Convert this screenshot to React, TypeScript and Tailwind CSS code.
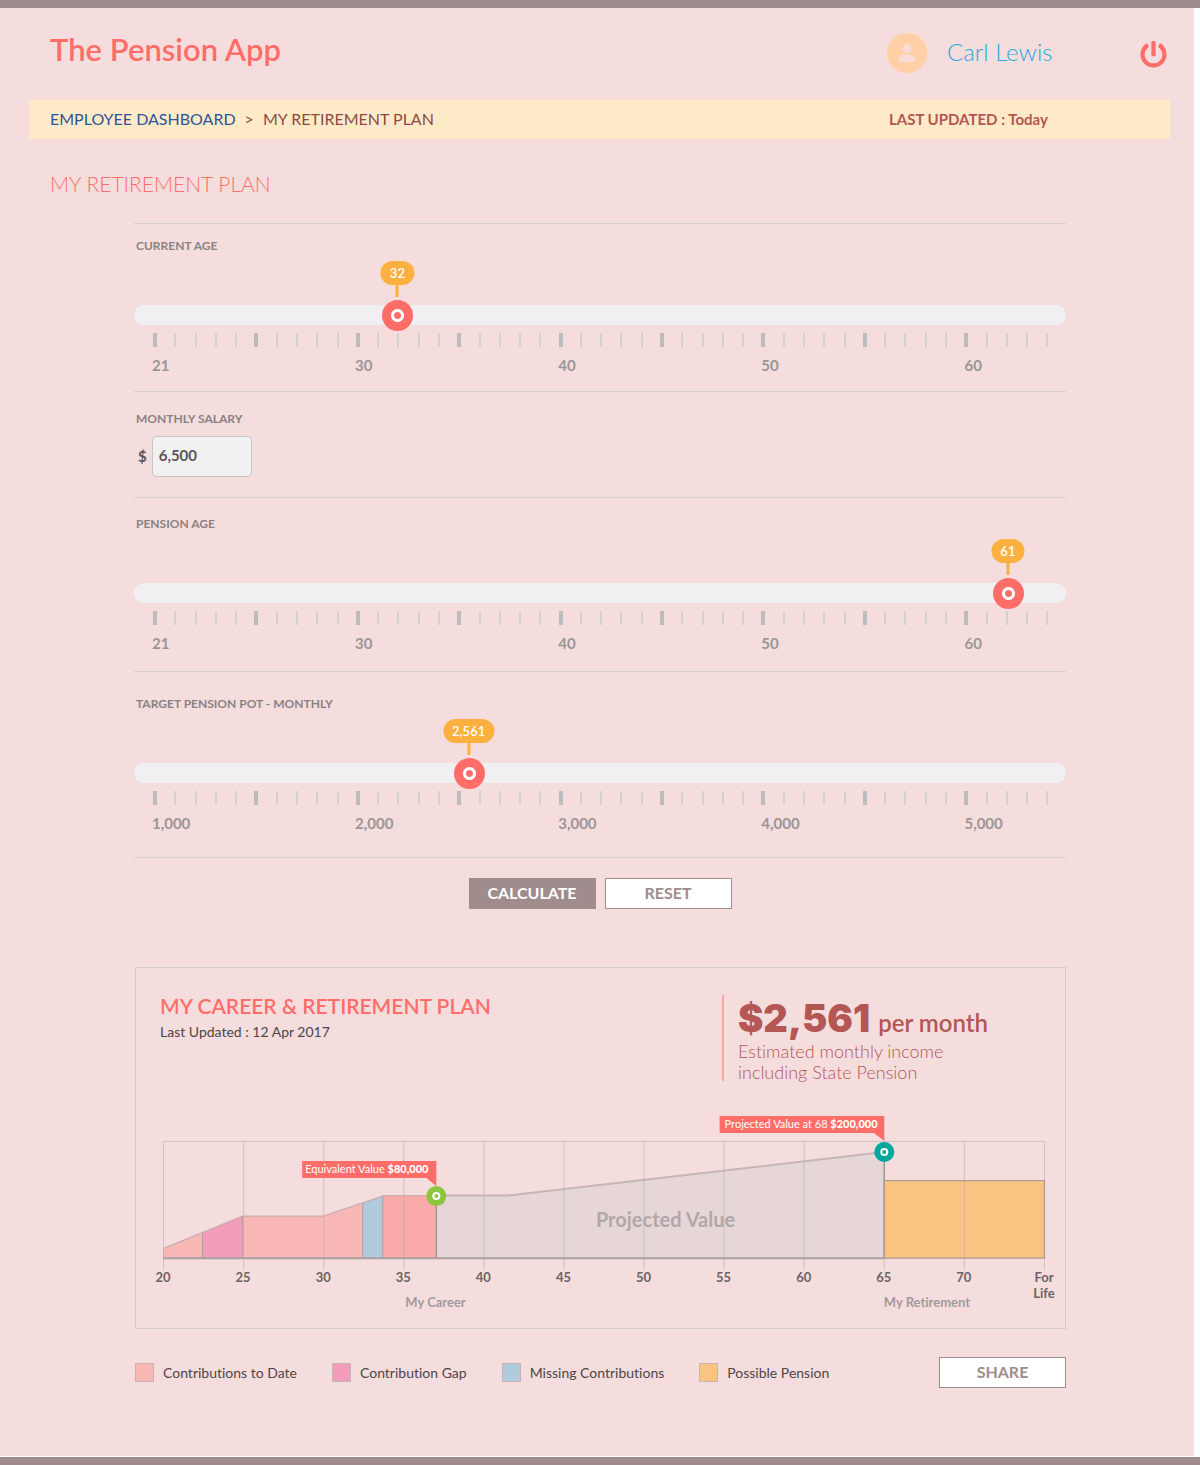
import { useState } from "react";
import type { ReactNode } from "react";
import { FaPowerOff, FaUser } from "react-icons/fa";

const TICKS = Array.from({ length: 45 }, (_, i) => i);

type SliderFieldProps = {
  id: string;
  label: string;
  min: number;
  max: number;
  step: number;
  initial: number;
  marks: string[];
  className: string;
};

function SliderField({ id, label, min, max, step, initial, marks, className }: SliderFieldProps) {
  const [value, setValue] = useState(initial);
  const fraction = (value - min) / (max - min);
  return (
    <section className={`border-t border-[#d6cfd1] ${className}`}>
      <label htmlFor={id} className="block pl-0.5 text-xs leading-4 font-bold text-[#8a8283]">
        {label}
      </label>
      <div className="relative mt-[51px] h-5">
        <input
          id={id}
          type="range"
          min={min}
          max={max}
          step={step}
          value={value}
          onChange={(e) => setValue(Number(e.target.value))}
          className="block h-5 w-full cursor-pointer appearance-none rounded-full bg-[#f0f0f2] [&::-webkit-slider-thumb]:size-[31px] [&::-webkit-slider-thumb]:appearance-none [&::-webkit-slider-thumb]:rounded-full [&::-webkit-slider-thumb]:bg-[radial-gradient(circle,#ff6d68_0_3px,#fff_4px_6px,#ff6d68_7px)]"
        />
        <output
          htmlFor={id}
          className="pointer-events-none absolute bottom-7 flex -translate-x-1/2 flex-col items-center"
          style={{ left: `calc(15px + ${fraction} * (100% - 31px))` }}
        >
          <span className="min-w-[33px] rounded-full bg-[#fbb040] px-[9px] text-center text-[13px] leading-6 font-semibold text-white">
            {Math.round(value).toLocaleString("en-US")}
          </span>
          <span className="h-3 w-[3px] bg-[#fbb040]" />
        </output>
      </div>
      <div className="mt-2 mr-4 ml-[19px] flex justify-between">
        {TICKS.map((i) => (
          <span key={i} className="flex h-[14px] w-1 justify-center">
            <span className={i % 5 === 0 ? "w-1 bg-[#bcbcbd]" : "w-0.5 bg-[#d3d1d2]"} />
          </span>
        ))}
      </div>
      <div className="mt-2 grid grid-cols-9 pl-[18px] text-[15px] leading-5 font-bold text-[#9b9595]">
        {marks.map((m) => (
          <span key={m} className="col-span-2 last:col-span-1">
            {m}
          </span>
        ))}
      </div>
    </section>
  );
}

function OutlineButton({ children }: { children: ReactNode }) {
  return (
    <button
      type="button"
      className="h-[31px] w-[127px] cursor-pointer border border-[#a08c8c] bg-white pb-0.5 text-base leading-none font-bold text-[#a08c8c]"
    >
      {children}
    </button>
  );
}

const GRID = [
  { x: 26, label: "20" },
  { x: 106, label: "25" },
  { x: 186, label: "30" },
  { x: 266, label: "35" },
  { x: 346, label: "40" },
  { x: 426, label: "45" },
  { x: 506, label: "50" },
  { x: 586, label: "55" },
  { x: 666, label: "60" },
  { x: 746, label: "65" },
  { x: 826, label: "70" },
  { x: 906, label: "For" },
];

function Marker({ x, y, fill }: { x: number; y: number; fill: string }) {
  return (
    <g>
      <circle cx={x} cy={y} r="10" fill={fill} />
      <circle cx={x} cy={y} r="3" fill="none" stroke="#fff" strokeWidth="2" />
    </g>
  );
}

function PlanChart() {
  return (
    <svg viewBox="-1 0 928 212" className="block w-full" role="img" aria-label="Pension value by age">
      <g>
        <path d="M26 150V140.500L65.500 124.500V150Z" fill="#f9b7b6" />
        <path d="M65.500 150V124.500L105.500 108V150Z" fill="#f19dbb" />
        <path d="M105.500 150V108H186L225.500 95V150Z" fill="#f9b7b6" />
        <path d="M225.500 150V95L245.500 87.500V150Z" fill="#b0cbdd" />
        <path d="M245.500 150V87.500H299V150Z" fill="#faaaa8" />
        <path d="M299 150V87.500H371L746.500 44V150Z" fill="#e6d6d7" />
        <path d="M746.500 150V72.500H906.500V150Z" fill="#f9c381" />
      </g>
      <g stroke="#a9a9a9" strokeOpacity="0.5" fill="none">
        <path d="M26 33.500H907" />
        {GRID.map((g) => (
          <path key={g.x} d={`M${g.x + 0.5} 33V162`} />
        ))}
      </g>
      <g fill="none">
        <path d="M26 140.500L105.500 108H186L247 87.500H299" stroke="#c9aeae" strokeWidth="1.300" />
        <path d="M299 87.500H371L746.500 44" stroke="#c6b5b5" strokeWidth="2" />
        <path d="M65.500 124.500V150M105.500 108V150M225.500 95V150M245.500 88V150" stroke="#b79a9d" />
        <path d="M299 88V150M746.500 44V150" stroke="#a39797" strokeWidth="1.500" />
        <path d="M26 150H746.500" stroke="#a8a1a1" strokeWidth="2" />
        <path d="M746.500 150V72.500H906.500V150Z" stroke="#aa9f93" strokeWidth="1.300" />
      </g>
      <path d="M165 53H299V78L289 70H165Z" fill="#ff6d68" />
      <path d="M582 8H746.500V33L736 25H582Z" fill="#ff6d68" />
      <Marker x={299} y={88} fill="#8cc63f" />
      <Marker x={746.5} y={44} fill="#00a79d" />
      <g fill="#fff" fontSize="11">
        <text x="168" y="65">
          Equivalent Value <tspan fontWeight="900">$80,000</tspan>
        </text>
        <text x="587" y="20">
          Projected Value at 68 <tspan fontWeight="900">$200,000</tspan>
        </text>
      </g>
      <text x="528" y="119" textAnchor="middle" fontSize="20" fontWeight="700" fill="#b0a8a8">
        Projected Value
      </text>
      <g fontSize="13" fontWeight="700" fill="#6b6364" textAnchor="middle">
        {GRID.map((g) => (
          <text key={g.x} x={g.x} y="174">
            {g.label}
          </text>
        ))}
        <text x="906" y="190">
          Life
        </text>
      </g>
      <g fontSize="13" fontWeight="700" fill="#a39a9b">
        <text x="268" y="199">
          My Career
        </text>
        <text x="746" y="199">
          My Retirement
        </text>
      </g>
    </svg>
  );
}

function LegendItem({ swatch, children }: { swatch: string; children: ReactNode }) {
  return (
    <li className="flex items-center gap-[9px]">
      <span className={`size-[19px] border border-[#c9b3b3] ${swatch}`} />
      {children}
    </li>
  );
}

export default function App() {
  const [salary, setSalary] = useState("6,500");
  return (
    <div className="border-y-8 border-[#a08c8c] bg-white pb-px font-['Lato','Liberation_Sans',sans-serif] [font-variant-ligatures:none]">
      <div className="mr-1.5 bg-[#f5dddd] pb-[68px]">
        <header className="flex h-[92px] items-center justify-between pb-0.5 pl-[50px]">
          <div className="pb-2 text-[31px] leading-9 font-semibold text-[#ff6d68]">The Pension App</div>
          <div className="flex w-[307px] items-center">
            <span className="flex size-10 items-center justify-center rounded-full bg-[#ffcfa5]">
              <FaUser className="size-[18px] text-[#f7dcd8]" />
            </span>
            <a href="#profile" className="ml-5 pb-0.5 text-2xl font-light text-[#29a8e0]">
              Carl Lewis
            </a>
            <button type="button" aria-label="Log out" className="mr-[27px] ml-auto cursor-pointer pt-0.5">
              <FaPowerOff className="size-[27px] text-[#ff6d68]" />
            </button>
          </div>
        </header>

        <nav
          aria-label="Breadcrumb"
          className="mr-6 ml-[29px] flex h-[39px] items-center justify-between bg-[#ffeac8] pl-[21px]"
        >
          <ol className="flex gap-[9px] pb-0.5 text-base text-[#8c4a46]">
            <li>
              <a href="#dashboard" className="text-[#2f5597]">
                EMPLOYEE DASHBOARD
              </a>
            </li>
            <li aria-hidden="true">&gt;</li>
            <li>MY RETIREMENT PLAN</li>
          </ol>
          <p className="w-[281px] text-[15px] font-bold text-[#b35654]">LAST UPDATED : Today</p>
        </nav>

        <h1 className="mt-[29px] pl-[50px] text-[21px] leading-8 font-light text-[#ff6d68]">
          MY RETIREMENT PLAN
        </h1>

        <main className="mt-[23px] mr-32 ml-[134px]">
          <form onSubmit={(e) => e.preventDefault()}>
            <SliderField
              id="current-age"
              label="CURRENT AGE"
              min={20.2}
              max={63}
              step={0.2}
              initial={32}
              marks={["21", "30", "40", "50", "60"]}
              className="pt-[14px] pb-4"
            />
            <section className="border-t border-[#d6cfd1] pt-[19px] pb-5">
              <label htmlFor="salary" className="block pl-0.5 text-xs leading-4 font-bold text-[#8a8283]">
                MONTHLY SALARY
              </label>
              <div className="mt-[9px] flex items-center gap-[5px] pl-1 text-[15px] font-bold text-[#5b5556]">
                <span>$</span>
                <input
                  id="salary"
                  type="text"
                  inputMode="numeric"
                  value={salary}
                  onChange={(e) => setSalary(e.target.value)}
                  className="h-[41px] w-[100px] rounded border border-[#c9c4c5] bg-[#f1f1f2] px-1.5 pb-1"
                />
              </div>
            </section>
            <SliderField
              id="pension-age"
              label="PENSION AGE"
              min={20.2}
              max={63}
              step={0.2}
              initial={61}
              marks={["21", "30", "40", "50", "60"]}
              className="pt-[18px] pb-[18px]"
            />
            <SliderField
              id="target-pot"
              label="TARGET PENSION POT - MONTHLY"
              min={1000}
              max={5400}
              step={1}
              initial={2561}
              marks={["1,000", "2,000", "3,000", "4,000", "5,000"]}
              className="pt-6 pb-6"
            />
            <div className="flex justify-center gap-[9px] border-t border-[#d6cfd1] pt-5">
              <button
                type="submit"
                className="h-[31px] w-[127px] cursor-pointer bg-[#a08c8c] pb-0.5 text-base leading-none font-bold text-white"
              >
                CALCULATE
              </button>
              <OutlineButton>RESET</OutlineButton>
            </div>
          </form>

          <section className="mt-[58px] ml-px border border-[#d3cacc]">
            <div className="flex justify-between pt-[27px] pl-6">
              <div>
                <h2 className="text-[21px] leading-[22px] font-semibold text-[#ff6d68]">
                  MY CAREER &amp; RETIREMENT PLAN
                </h2>
                <p className="mt-[3px] text-sm leading-6 text-[#4d4546]">Last Updated : 12 Apr 2017</p>
              </div>
              <div className="h-[86px] w-[343px] border-l-2 border-[#ffa5a0] pl-[14px] text-[#b35654]">
                <p className="flex h-[46px] items-baseline gap-2 text-2xl leading-[46px] font-semibold">
                  <strong className="font-['Inter'] text-[38px] font-black">$2,561</strong>
                  <span>per month</span>
                </p>
                <p className="text-lg leading-[21px] font-light">
                  Estimated monthly income
                  <br />
                  including State Pension
                </p>
              </div>
            </div>
            <div className="pt-[27px] pb-2">
              <PlanChart />
            </div>
          </section>

          <div className="mt-7 flex items-center justify-between">
            <ul className="ml-px flex gap-[35px] text-sm text-[#4d4546]">
              <LegendItem swatch="bg-[#f9b7b6]">Contributions to Date</LegendItem>
              <LegendItem swatch="bg-[#f19dbb]">Contribution Gap</LegendItem>
              <LegendItem swatch="bg-[#b0cbdd]">Missing Contributions</LegendItem>
              <LegendItem swatch="bg-[#f9c381]">Possible Pension</LegendItem>
            </ul>
            <OutlineButton>SHARE</OutlineButton>
          </div>
        </main>
      </div>
    </div>
  );
}
